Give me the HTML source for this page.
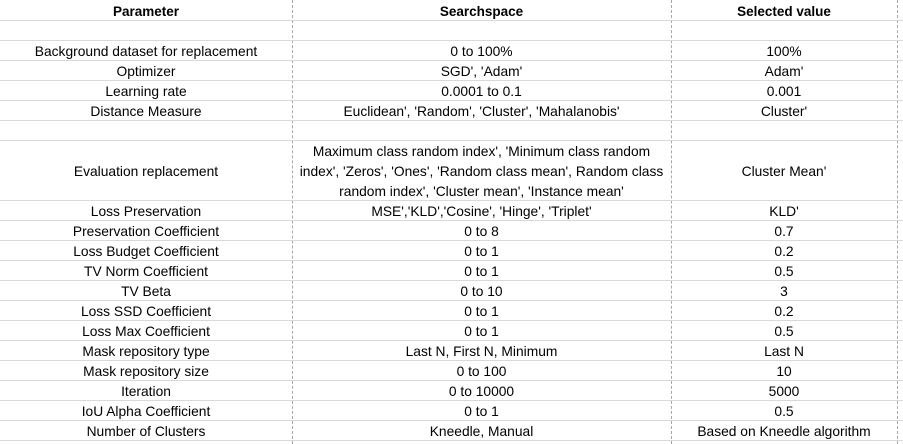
<!DOCTYPE html>
<html><head><meta charset="utf-8"><style>
body{margin:0;width:903px;height:444px;background:#fff;position:relative;overflow:hidden;font-family:"Liberation Sans",Arial,sans-serif;font-size:13.8px;color:#000}
.h{position:absolute;left:0;width:903px;height:1px;background:#d9d9d9}
.v{position:absolute;top:0;height:444px;width:0;border-left:1px dashed #a8a8a8}
.c{position:absolute;text-align:center;line-height:20px;height:20px;white-space:nowrap}
.a{left:0;width:292px}.b{left:292px;width:379px}.d{left:671px;width:226px}
.bold{font-weight:bold;font-size:13.5px}
</style></head><body>
<div class="v" style="left:292px"></div>
<div class="v" style="left:671px"></div>
<div class="v" style="left:897px"></div>
<div id="lines"></div>
<script>
var ys=[20,40,60,80,100,120,140,200,220,240,260,280,300,320,340,360,380,400,420,440];
var s='';ys.forEach(function(y){s+='<div class="h" style="top:'+y+'px"></div>'});
document.getElementById('lines').innerHTML=s;
</script>
<div class="c a bold" style="top:2px">Parameter</div>
<div class="c b bold" style="top:2px">Searchspace</div>
<div class="c d bold" style="top:2px">Selected value</div>

<div class="c a" style="top:42px">Background dataset for replacement</div><div class="c b" style="top:42px">0 to 100%</div><div class="c d" style="top:42px">100%</div>
<div class="c a" style="top:62px">Optimizer</div><div class="c b" style="top:62px">SGD', 'Adam'</div><div class="c d" style="top:62px">Adam'</div>
<div class="c a" style="top:82px">Learning rate</div><div class="c b" style="top:82px">0.0001 to 0.1</div><div class="c d" style="top:82px">0.001</div>
<div class="c a" style="top:102px">Distance Measure</div><div class="c b" style="top:102px">Euclidean', 'Random', 'Cluster', 'Mahalanobis'</div><div class="c d" style="top:102px">Cluster'</div>

<div class="c a" style="top:162px">Evaluation replacement</div>
<div class="c b" style="top:142px">Maximum class random index', 'Minimum class random</div>
<div class="c b" style="top:162px">index', 'Zeros', 'Ones', 'Random class mean', Random class</div>
<div class="c b" style="top:182px">random index', 'Cluster mean', 'Instance mean'</div>
<div class="c d" style="top:162px">Cluster Mean'</div>

<div class="c a" style="top:202px">Loss Preservation</div><div class="c b" style="top:202px">MSE','KLD','Cosine', 'Hinge', 'Triplet'</div><div class="c d" style="top:202px">KLD'</div>
<div class="c a" style="top:222px">Preservation Coefficient</div><div class="c b" style="top:222px">0 to 8</div><div class="c d" style="top:222px">0.7</div>
<div class="c a" style="top:242px">Loss Budget Coefficient</div><div class="c b" style="top:242px">0 to 1</div><div class="c d" style="top:242px">0.2</div>
<div class="c a" style="top:262px">TV Norm Coefficient</div><div class="c b" style="top:262px">0 to 1</div><div class="c d" style="top:262px">0.5</div>
<div class="c a" style="top:282px">TV Beta</div><div class="c b" style="top:282px">0 to 10</div><div class="c d" style="top:282px">3</div>
<div class="c a" style="top:302px">Loss SSD Coefficient</div><div class="c b" style="top:302px">0 to 1</div><div class="c d" style="top:302px">0.2</div>
<div class="c a" style="top:322px">Loss Max Coefficient</div><div class="c b" style="top:322px">0 to 1</div><div class="c d" style="top:322px">0.5</div>
<div class="c a" style="top:342px">Mask repository type</div><div class="c b" style="top:342px">Last N, First N, Minimum</div><div class="c d" style="top:342px">Last N</div>
<div class="c a" style="top:362px">Mask repository size</div><div class="c b" style="top:362px">0 to 100</div><div class="c d" style="top:362px">10</div>
<div class="c a" style="top:382px">Iteration</div><div class="c b" style="top:382px">0 to 10000</div><div class="c d" style="top:382px">5000</div>
<div class="c a" style="top:402px">IoU Alpha Coefficient</div><div class="c b" style="top:402px">0 to 1</div><div class="c d" style="top:402px">0.5</div>
<div class="c a" style="top:422px">Number of Clusters</div><div class="c b" style="top:422px">Kneedle, Manual</div><div class="c d" style="top:422px">Based on Kneedle algorithm</div>
</body></html>
